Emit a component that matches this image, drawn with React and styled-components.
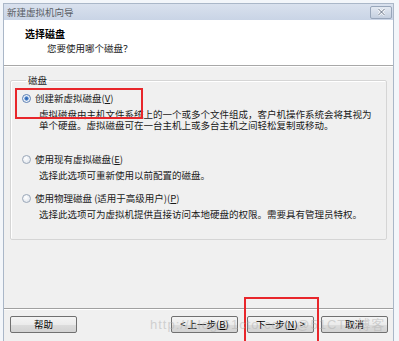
import styled, { createGlobalStyle } from "styled-components";

const Global = createGlobalStyle`
  html, body {
    margin: 0;
    padding: 0;
  }
  body {
    font-family: "Noto Sans CJK SC", "Liberation Sans", sans-serif;
    font-size: 9.5px;
    color: #1a1a1a;
  }
`;

const Page = styled.div`
  position: relative;
  width: 399px;
  height: 341px;
  overflow: hidden;
  background: #f3f6fa;
  padding: 3px 5px 0 3px;
  box-sizing: border-box;
`;

const Window = styled.div`
  width: 391px;
  height: 350px;
  border: 1px solid #aab7c8;
  border-bottom: none;
  box-sizing: border-box;
  background: #f0f0f0;
  display: flex;
  flex-direction: column;
`;

const TitleBar = styled.div`
  height: 16px;
  display: flex;
  align-items: center;
  justify-content: space-between;
  padding: 0 1px 0 3px;
  background: linear-gradient(#d9e1ee, #c9d4e6);
  color: #5a5f66;
  font-size: 9.5px;
`;

const CloseButton = styled.div`
  width: 22px;
  height: 13px;
  border: 1px solid #98a6ba;
  border-radius: 2px;
  box-sizing: border-box;
  background: linear-gradient(#e3e9f2, #c4cfdf);
  display: flex;
  align-items: center;
  justify-content: center;
`;

const Header = styled.div`
  height: 46px;
  background: #ffffff;
  border-bottom: 1px solid #a8a8a8;
  box-shadow: 0 1px 0 #ffffff;
  padding: 7px 0 0 21px;
  box-sizing: border-box;
`;

const HeaderTitle = styled.div`
  font-weight: bold;
  font-size: 10px;
  line-height: 13px;
  color: #000;
`;

const HeaderSub = styled.div`
  margin: 2px 0 0 22px;
  line-height: 12px;
`;

const Body = styled.div`
  display: flex;
  flex-direction: column;
  padding: 8px 6px 0 6px;
`;

const Group = styled.fieldset`
  margin: 0;
  height: 166px;
  box-sizing: border-box;
  border: 1px solid #d5d5d5;
  box-shadow: inset 1px 1px 0 #ffffff;
  border-radius: 2px;
  padding: 5px 0 0 11px;
`;

const Legend = styled.legend`
  margin-left: 4px;
  padding: 0 2px;
  line-height: 12px;
`;

const Option = styled.div`
  margin-top: ${(p) => p.$gap || 0}px;
`;

const Row = styled.div`
  display: flex;
  align-items: center;
  height: 14px;
  line-height: 14px;
`;

const Radio = styled.span`
  width: 9px;
  height: 9px;
  border-radius: 50%;
  border: 1px solid ${(p) => (p.$checked ? "#5b7fb3" : "#9aa7b8")};
  box-sizing: border-box;
  margin-right: 4px;
  background: ${(p) =>
    p.$checked
      ? "radial-gradient(circle, #2e5fa8 0, #4d86d0 1.8px, #e4ebf4 2.4px, #fdfdfd 4px)"
      : "radial-gradient(circle at 40% 35%, #ffffff 0, #e6eaf0 4px)"};
`;

const Desc = styled.div`
  margin: 4px 0 0 17px;
  line-height: 11px;
`;

const Key = styled.span`
  text-decoration: underline;
`;

const Footer = styled.div`
  margin-top: 68px;
  border-top: 1px solid #a0a0a0;
  box-shadow: inset 0 1px 0 #ffffff;
  display: flex;
  align-items: center;
  padding: 7px 5px 0 6px;
`;

const Button = styled.button`
  width: 67px;
  height: 17px;
  margin-left: ${(p) => p.$gap || 0}px;
  padding: 0;
  border: 1px solid #707070;
  border-radius: 2px;
  background: linear-gradient(#f4f4f4 0%, #ebebeb 50%, #dcdcdc 51%, #d2d2d2 100%);
  font-family: "Noto Sans CJK SC", "Liberation Sans", sans-serif;
  font-size: 9.5px;
  color: #000;
  line-height: 15px;
`;

const Spacer = styled.div`
  flex: 1;
`;

const Mark = styled.div`
  position: absolute;
  left: ${(p) => p.$x}px;
  top: ${(p) => p.$y}px;
  width: ${(p) => p.$w}px;
  height: ${(p) => p.$h}px;
  border: 2px solid #e8262b;
  box-sizing: border-box;
  pointer-events: none;
`;

const Watermark = styled.div`
  position: absolute;
  left: 150px;
  top: 314px;
  font-family: "Liberation Sans", "Noto Sans CJK SC", sans-serif;
  font-size: 13px;
  letter-spacing: 1px;
  color: rgba(175, 175, 175, 0.5);
  white-space: nowrap;
  pointer-events: none;
`;

export default function App() {
  return (
    <Page>
      <Global />
      <Window>
        <TitleBar>
          <span>新建虚拟机向导</span>
          <CloseButton>
            <svg width="9" height="8" viewBox="0 0 9 8">
              <path d="M1.5 1 L7.5 7 M7.5 1 L1.5 7" stroke="#ffffff" strokeWidth="2.4" />
              <path d="M1.5 1 L7.5 7 M7.5 1 L1.5 7" stroke="#5d6b80" strokeWidth="1" />
            </svg>
          </CloseButton>
        </TitleBar>
        <Header>
          <HeaderTitle>选择磁盘</HeaderTitle>
          <HeaderSub>您要使用哪个磁盘？</HeaderSub>
        </Header>
        <Body>
          <Group>
            <Legend>磁盘</Legend>
            <Option>
              <Row>
                <Radio $checked />
                创建新虚拟磁盘(<Key>V</Key>)
              </Row>
              <Desc>
                虚拟磁盘由主机文件系统上的一个或多个文件组成，客户机操作系统会将其视为
                <br />
                单个硬盘。虚拟磁盘可在一台主机上或多台主机之间轻松复制或移动。
              </Desc>
            </Option>
            <Option $gap={21}>
              <Row>
                <Radio />
                使用现有虚拟磁盘(<Key>E</Key>)
              </Row>
              <Desc>选择此选项可重新使用以前配置的磁盘。</Desc>
            </Option>
            <Option $gap={10}>
              <Row>
                <Radio />
                使用物理磁盘 (适用于高级用户)(<Key>P</Key>)
              </Row>
              <Desc>选择此选项可为虚拟机提供直接访问本地硬盘的权限。需要具有管理员特权。</Desc>
            </Option>
          </Group>
        </Body>
        <Footer>
          <Button>帮助</Button>
          <Spacer />
          <Button>
            &lt; 上一步(<Key>B</Key>)
          </Button>
          <Button $gap={9}>
            下一步(<Key>N</Key>) &gt;
          </Button>
          <Button $gap={7}>取消</Button>
        </Footer>
      </Window>
      <Mark $x={15} $y={88} $w={128} $h={31} />
      <Mark $x={244} $y={297} $w={75} $h={50} />
      <Watermark>http://blog.51cto.com @51CTO博客</Watermark>
    </Page>
  );
}
